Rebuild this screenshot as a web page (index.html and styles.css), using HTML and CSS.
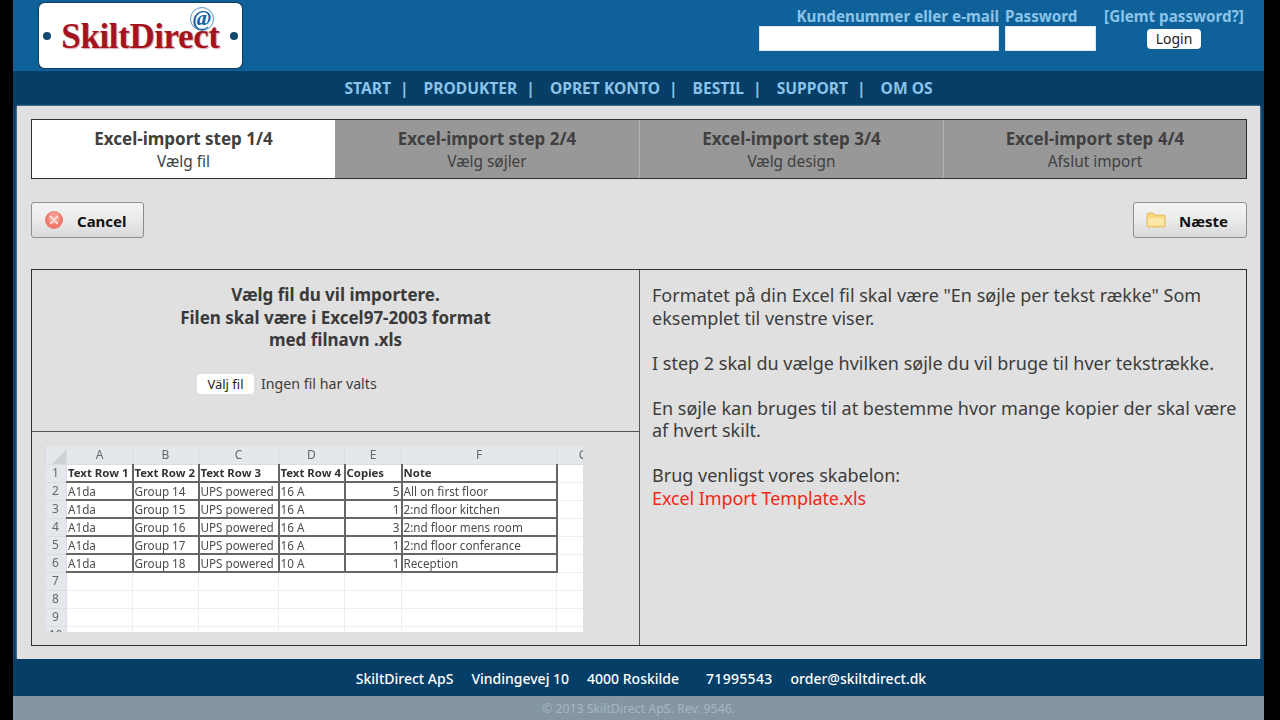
FILE: index.html
```html
<!DOCTYPE html>
<html lang="da">
<head>
<meta charset="utf-8">
<title>SkiltDirect</title>
<link rel="stylesheet" href="styles.css">
</head>
<body>
<div class="page">
  <header class="top">
    <div class="logo">
      <span class="dot"></span>
      <span class="logo-text">SkiltDirect</span>
      <span class="dot"></span>
      <span class="logo-at">@</span>
    </div>
    <form class="login">
      <label class="login-label right">Kundenummer eller e-mail</label>
      <label class="login-label">Password</label>
      <a class="login-label center">[Glemt password?]</a>
      <input class="field" type="text">
      <input class="field" type="password">
      <div class="login-cell"><button class="login-btn" type="button">Login</button></div>
    </form>
  </header>
  <nav class="nav">
    <a>START</a><i>|</i><a>PRODUKTER</a><i>|</i><a>OPRET KONTO</a><i>|</i><a>BESTIL</a><i>|</i><a>SUPPORT</a><i>|</i><a>OM OS</a>
  </nav>
  <main class="main">
    <div class="steps">
      <div class="step active"><b>Excel-import step 1/4</b><span>Vælg fil</span></div>
      <div class="step"><b>Excel-import step 2/4</b><span>Vælg søjler</span></div>
      <div class="step"><b>Excel-import step 3/4</b><span>Vælg design</span></div>
      <div class="step"><b>Excel-import step 4/4</b><span>Afslut import</span></div>
    </div>
    <div class="actions">
      <button class="act act-cancel" type="button">
        <svg class="icon" width="20" height="20" viewBox="0 0 20 20"><circle cx="10" cy="10" r="9" fill="#ee7a6c"/><circle cx="10" cy="8" r="6" fill="#f59a8e"/><path d="M6.8 6.8l6.4 6.4M13.2 6.8l-6.4 6.4" stroke="#fbdcd6" stroke-width="2" stroke-linecap="round"/></svg>
        <span>Cancel</span>
      </button>
      <button class="act" type="button">
        <svg class="icon" width="20" height="18" viewBox="0 0 20 18"><path d="M1 3.500C1 2.500 1.600 2 2.400 2h5l1.600 2h8.600c.9 0 1.400.5 1.400 1.400v9.200c0 .9-.5 1.400-1.400 1.400H2.400C1.500 16 1 15.500 1 14.600z" fill="#f7d67e" stroke="#e2bc62"/><path d="M2 7h16v7.500H2z" fill="#fbe7a8"/></svg>
        <span>Næste</span>
      </button>
    </div>
    <div class="panel">
      <div class="left">
        <div class="chooser">
          <p class="choose-text">Vælg fil du vil importere.<br>Filen skal være i Excel97-2003 format<br>med filnavn .xls</p>
          <div class="file"><button class="file-btn" type="button">Välj fil</button><span>Ingen fil har valts</span></div>
        </div>
        <div class="sample">
          <div class="sheet">
            <table>
              <colgroup><col class="c0"><col class="c1"><col class="c2"><col class="c3"><col class="c4"><col class="c5"><col class="c6"><col class="c7"></colgroup>
              <thead><tr><th class="corner"></th><th>A</th><th>B</th><th>C</th><th>D</th><th>E</th><th>F</th><th>G</th></tr></thead>
              <tbody>
                <tr class="data head"><th>1</th><td>Text Row 1</td><td>Text Row 2</td><td>Text Row 3</td><td>Text Row 4</td><td>Copies</td><td>Note</td><td class="free"></td></tr>
                <tr class="data"><th>2</th><td>A1da</td><td>Group 14</td><td>UPS powered</td><td>16 A</td><td class="num">5</td><td>All on first floor</td><td class="free"></td></tr>
                <tr class="data"><th>3</th><td>A1da</td><td>Group 15</td><td>UPS powered</td><td>16 A</td><td class="num">1</td><td>2:nd floor kitchen</td><td class="free"></td></tr>
                <tr class="data"><th>4</th><td>A1da</td><td>Group 16</td><td>UPS powered</td><td>16 A</td><td class="num">3</td><td>2:nd floor mens room</td><td class="free"></td></tr>
                <tr class="data"><th>5</th><td>A1da</td><td>Group 17</td><td>UPS powered</td><td>16 A</td><td class="num">1</td><td>2:nd floor conferance</td><td class="free"></td></tr>
                <tr class="data"><th>6</th><td>A1da</td><td>Group 18</td><td>UPS powered</td><td>10 A</td><td class="num">1</td><td>Reception</td><td class="free"></td></tr>
                <tr><th>7</th><td></td><td></td><td></td><td></td><td></td><td></td><td></td></tr>
                <tr><th>8</th><td></td><td></td><td></td><td></td><td></td><td></td><td></td></tr>
                <tr><th>9</th><td></td><td></td><td></td><td></td><td></td><td></td><td></td></tr>
                <tr><th>10</th><td></td><td></td><td></td><td></td><td></td><td></td><td></td></tr>
              </tbody>
            </table>
          </div>
        </div>
      </div>
      <div class="right-col">
        <p>Formatet på din Excel fil skal være "En søjle per tekst række" Som eksemplet til venstre viser.</p>
        <p>I step 2 skal du vælge hvilken søjle du vil bruge til hver tekstrække.</p>
        <p>En søjle kan bruges til at bestemme hvor mange kopier der skal være af hvert skilt.</p>
        <p>Brug venligst vores skabelon:<br><a class="tpl">Excel Import Template.xls</a></p>
      </div>
    </div>
  </main>
  <footer class="foot">
    <span>SkiltDirect ApS</span><span>Vindingevej 10</span><span class="wide">4000 Roskilde</span><span class="phone">71995543</span><span>order@skiltdirect.dk</span>
  </footer>
  <div class="copy">© 2013 SkiltDirect ApS. Rev. 9546.</div>
</div>
</body>
</html>
```
FILE: styles.css
```css
* { box-sizing: border-box; }
html, body { margin: 0; height: 100%; background: #000; overflow: hidden; }
body { font-family: "Noto Sans", "Liberation Sans", sans-serif; color: #3c3c3c; }
.page { width: 1251px; height: 720px; margin-left: 13px; display: flex; flex-direction: column; background: #0a4068; }

.top { height: 71px; background: #0e6299; display: flex; justify-content: space-between; padding: 2px 18px 0 25px; }
.logo { position: relative; width: 205px; height: 67px; background: #fff; border: 1px solid #123f60; border-radius: 7px; display: flex; align-items: center; justify-content: space-between; padding: 0 4px; box-shadow: 0 0 1px #0a3553; }
.dot { width: 8px; height: 8px; border-radius: 50%; background: #11496e; }
.logo-text { padding-top: 2px; font: bold 35px "Liberation Serif", serif; color: #a5141e; letter-spacing: -0.4px; text-shadow: 1px 1px 1px #d9a9ac; }
.logo-at { position: absolute; left: 151px; top: 4px; width: 24px; height: 24px; border: 1px solid #5d95bb; border-radius: 50%; font: italic bold 22px/20px "Liberation Serif", serif; color: #1a64a0; text-align: center; }

.login { display: grid; grid-template-columns: 240px 91px 144px; column-gap: 6px; align-content: start; padding-top: 4px; }
.login-label { font-size: 15.2px; font-weight: 700; line-height: 20px; color: #8cc3e8; white-space: nowrap; }
.right { text-align: right; }
.center { text-align: center; }
.field { height: 25px; border: 0; background: #fff; box-shadow: inset 0 0 0 1px #dbe6ee; padding: 0; }
.login-cell { display: flex; justify-content: center; align-items: center; }
.login-btn { width: 54px; height: 20px; border: 0; border-radius: 4px; background: #fff; font: 14px/20px "Noto Sans", sans-serif; color: #222; padding: 0; }

.nav { height: 35px; padding-bottom: 1px; background: #053e66; display: flex; justify-content: center; align-items: center; color: #8cc3e8; font-size: 15.6px; font-weight: 700; }
.nav i { font-style: normal; margin: 0 15px 0 9px; }

.main { height: 553px; margin: 0 4px; background: #e0e0e0; padding: 13px 13px 0 14px; display: flex; flex-direction: column; box-shadow: 0 0 2px #b9c4cc; }
.steps { height: 60px; display: grid; grid-template-columns: 303px 304px 304px 1fr; border: 1px solid #2f2f2f; background: #989898; }
.step { padding-top: 2px; display: flex; flex-direction: column; align-items: center; justify-content: center; border-left: 1px solid #b0b0b0; color: #404040; }
.step:first-child, .step.active + .step { border-left: 0; }
.step.active { background: #fff; }
.step b { font-size: 17px; line-height: 22px; }
.step span { font-size: 15.4px; line-height: 23px; }

.actions { display: flex; justify-content: space-between; margin-top: 23px; }
.act { width: 114px; height: 36px; display: flex; align-items: center; padding: 0 0 0 12px; border: 1px solid #8e8e8e; border-radius: 3px; background: linear-gradient(#f3f3f3, #ececec 45%, #d9d9d9); color: #111; font: 700 15px "Noto Sans", sans-serif; }
.act-cancel { width: 113px; }
.act span { margin-left: 13px; padding-top: 2px; }

.panel { height: 377px; margin-top: 31px; border: 1px solid #2f2f2f; display: grid; grid-template-columns: 608px 1fr; }
.left { border-right: 1px solid #555; display: flex; flex-direction: column; }
.chooser { height: 162px; border-bottom: 1px solid #555; padding-top: 14px; text-align: center; }
.choose-text { margin: 0; font-size: 17px; font-weight: 700; line-height: 22.5px; color: #3a3a3a; }
.file { margin-top: 22px; padding-left: 165px; display: flex; align-items: center; gap: 7px; font-size: 14.2px; }
.file-btn { width: 57px; height: 20px; border: 0; border-radius: 4px; background: #fff; font: 13px "Noto Sans", sans-serif; color: #222; padding: 0; }
.sample { padding: 14px 0 0 12px; }
.sheet { width: 539px; height: 186px; overflow: hidden; background: #fff; filter: blur(0.35px); }
.sheet table { border-collapse: collapse; table-layout: fixed; width: 565px; font-size: 11.7px; line-height: 14px; color: #4c4c4c; }
.c0 { width: 22px; } .c1 { width: 66px; } .c2 { width: 66px; } .c3 { width: 80px; } .c4 { width: 66px; } .c5 { width: 57px; } .c6 { width: 155px; } .c7 { width: 53px; }
.sheet th { height: 18px; padding: 0; background: #e4e8ec; font-weight: 400; font-size: 12px; color: #666; border: 1px solid #d9dde1; text-align: center; }
.sheet thead th { border-top: 0; }
.sheet .corner { background: linear-gradient(135deg, #e4e8ec 62%, #cdd2d6 62%); }
.sheet td { height: 18px; padding: 0 1px; border: 1px solid #eceff1; white-space: nowrap; overflow: hidden; }
.sheet .data td { border: 2px solid #666; }
.sheet .data td:first-of-type { border-left: 0; }
.sheet .head td { border-top: 0; font-size: 11.4px; font-weight: 700; color: #333; }
.sheet .data td.free { border: 1px solid #eceff1; border-left: 2px solid #666; }
.sheet .num { text-align: right; }

.right-col { padding: 14px 6px 0 12px; font-size: 18px; line-height: 22.5px; color: #3c3c3c; }
.right-col p { margin: 0 0 22.5px; }
.tpl { color: #f0281c; letter-spacing: -0.1px; }

.foot { height: 37px; padding: 2px 0 0 5px; background: #053e66; display: flex; justify-content: center; align-items: center; gap: 18px; color: #fff; font-size: 14px; font-weight: 500; }
.wide { margin-right: 9px; }
.phone { letter-spacing: 0.3px; }
.copy { height: 24px; background: #8496a4; color: #a9b6c0; font-size: 12.3px; display: flex; align-items: center; justify-content: center; }
```
